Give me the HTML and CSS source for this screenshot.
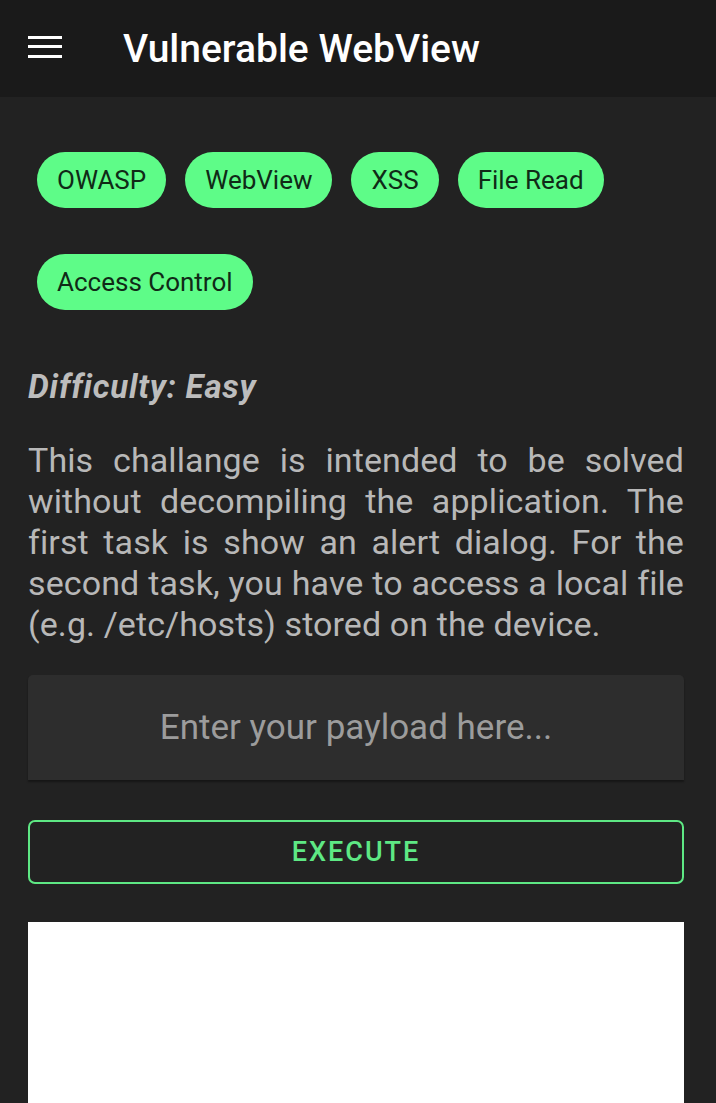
FILE: index.html
```html
<!DOCTYPE html>
<html>
<head>
<meta charset="utf-8">
<link rel="stylesheet" href="styles.css">
</head>
<body>
<header class="appbar">
  <svg class="menu" width="34" height="24" viewBox="0 0 34 24">
    <rect x="0" y="1" width="34" height="3" fill="#fff"/>
    <rect x="0" y="10" width="34" height="3" fill="#fff"/>
    <rect x="0" y="20" width="34" height="3" fill="#fff"/>
  </svg>
  <h1 class="title">Vulnerable WebView</h1>
</header>
<main class="content">
  <div class="chips">
    <span class="chip">OWASP</span>
    <span class="chip">WebView</span>
    <span class="chip">XSS</span>
    <span class="chip">File Read</span>
    <span class="chip">Access Control</span>
  </div>
  <p class="difficulty">Difficulty: Easy</p>
  <p class="desc">This challange is intended to be solved without decompiling the application. The first task is show an alert dialog. For the second task, you have to access a local file (e.g. /etc/hosts) stored on the device.</p>
  <div class="input">Enter your payload here...</div>
  <button class="execute">EXECUTE</button>
  <div class="webview"></div>
</main>
</body>
</html>
```
FILE: styles.css
```css
html, body {
  margin: 0;
  padding: 0;
  background: #222222;
  font-family: Roboto, "Noto Sans", sans-serif;
  height: 1103px;
  overflow: hidden;
}
.appbar {
  height: 97px;
  background: #1a1a1a;
  display: flex;
  align-items: center;
  padding-left: 28px;
  box-sizing: border-box;
}
.menu {
  display: block;
  margin-top: -4px;
}
.title {
  margin: 0 0 0 61px;
  color: #ffffff;
  font-size: 39px;
  font-weight: 500;
  line-height: 46px;
}
.content {
  padding: 55px 32px 0 28px;
}
.chips {
  display: flex;
  flex-wrap: wrap;
  column-gap: 19px;
  row-gap: 46px;
  padding-left: 9px;
}
.chip {
  height: 56px;
  line-height: 56px;
  padding: 0 20px;
  border-radius: 28px;
  background: #5efc88;
  color: #102a17;
  font-size: 26px;
}
.difficulty {
  margin: 57px 0 0;
  color: #bdbdbd;
  font-size: 33px;
  font-weight: 700;
  font-style: italic;
  letter-spacing: 0.8px;
  line-height: 40px;
}
.desc {
  margin: 33px 0 0;
  color: #b8b8b8;
  font-size: 34px;
  letter-spacing: 0.1px;
  line-height: 41px;
  text-align: justify;
}
.input {
  margin-top: 30px;
  height: 105px;
  background: #2d2d2d;
  border-radius: 5px 5px 0 0;
  box-shadow: 0 2px 2px rgba(0,0,0,0.35);
  color: #9c9c9c;
  font-size: 35px;
  display: flex;
  align-items: center;
  justify-content: center;
}
.execute {
  display: block;
  width: 100%;
  margin-top: 40px;
  height: 64px;
  background: transparent;
  border: 2px solid #5ee884;
  border-radius: 7px;
  color: #5ee884;
  font-family: Roboto, sans-serif;
  font-size: 27px;
  font-weight: 500;
  letter-spacing: 2px;
}
.webview {
  margin-top: 38px;
  height: 200px;
  background: #ffffff;
}
```
